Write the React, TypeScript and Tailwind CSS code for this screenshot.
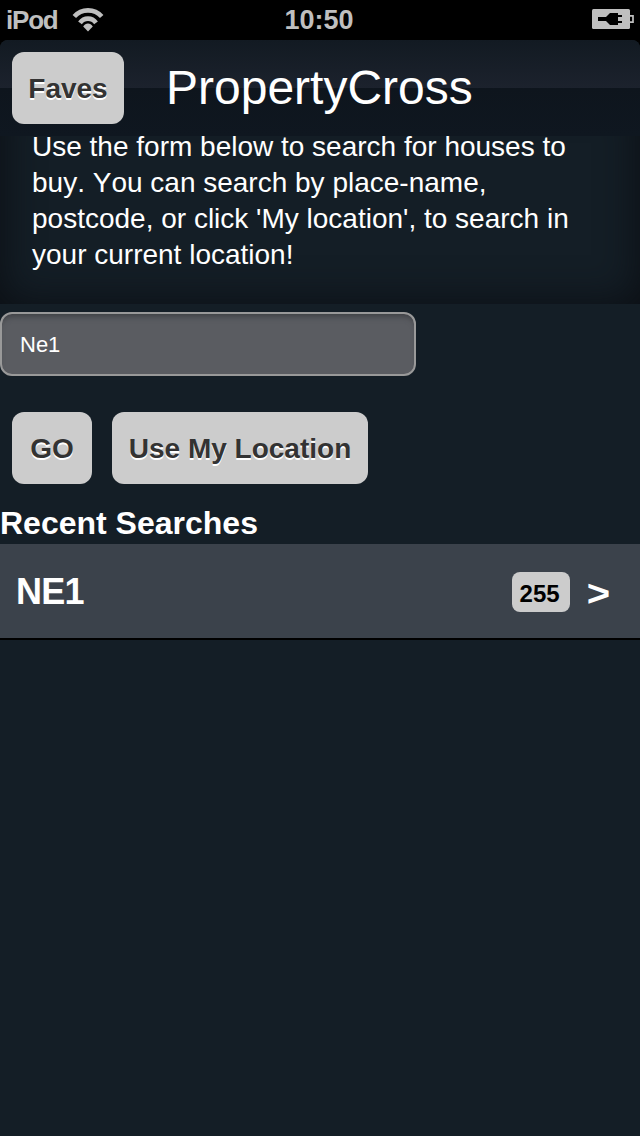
export default function App() {
  return (
    <div className="flex h-[1136px] w-[640px] flex-col overflow-hidden bg-black font-['Liberation_Sans',Arial,sans-serif] text-white [font-kerning:none]">
      <StatusBar />
      <div className="flex flex-1 flex-col overflow-hidden rounded-t-lg bg-[#141e26]">
        <header className="flex h-24 shrink-0 items-start bg-[linear-gradient(to_bottom,#121a22_0%,#1c222d_50%,#0e151d_50%,#0f1720_100%)] pl-3 pt-3">
          <Button label="Faves" className="w-28" />
          <h1 className="ml-[42px] h-[72px] whitespace-nowrap text-[48px] leading-[72px]">PropertyCross</h1>
        </header>
        <section className="flex h-[168px] shrink-0 flex-col overflow-hidden">
          <div className="-mt-[42px] h-[210px] shrink-0 px-8 pt-[35px] shadow-[inset_0_0_40px_#0b0e13]">
            <p className="whitespace-nowrap text-[28px] leading-9">
              Use the form below to search for houses to<br />
              buy. You can search by place-name,<br />
              postcode, or click 'My location', to search in<br />
              your current location!
            </p>
          </div>
        </section>
        <div className="mt-2 flex h-16 w-[416px] shrink-0 items-center rounded-xl border-2 border-[#999] bg-[#5a5c61] pl-[18px] text-[22px] shadow-[inset_0_6px_6px_-4px_#3b3d41]">
          Ne1
        </div>
        <div className="mt-9 flex shrink-0 gap-5 pl-3">
          <Button label="GO" className="w-20" />
          <Button label="Use My Location" className="w-64" />
        </div>
        <h2 className="mt-5 h-10 shrink-0 whitespace-nowrap text-[32px] font-bold leading-[38px]">Recent Searches</h2>
        <div className="flex h-24 shrink-0 items-center border-b-2 border-black bg-[#3b424b] pl-4">
          <span className="flex-1 pt-0.5 text-[36px] font-bold tracking-[-0.7px]">NE1</span>
          <span className="mt-0.5 flex h-10 w-[58px] items-center justify-center rounded-lg bg-[#ccc] pt-1 pr-0.5 text-[24px] font-bold text-black">255</span>
          <span className="ml-[17px] mr-[30px] mt-1 origin-center scale-y-90 text-[40px] font-bold">&gt;</span>
        </div>
      </div>
    </div>
  );
}

function Button({ label, className }: { label: string; className: string }) {
  return (
    <button className={`flex h-[72px] shrink-0 items-center justify-center whitespace-nowrap rounded-xl bg-[#ccc] pt-0.5 text-[28px] font-bold text-[#333] [text-shadow:0_2px_0_#fff] ${className}`}>
      {label}
    </button>
  );
}

function StatusBar() {
  return (
    <div className="grid h-10 shrink-0 grid-cols-3 items-center bg-black pl-1.5 pr-1.5 text-[27px] font-bold text-[#bfbfbf]">
      <div className="flex items-center">
        <span className="w-[66px] text-[26px] tracking-[-1.2px]">iPod</span>
        <svg width="32" height="24" viewBox="0 0 32 24" fill="none" stroke="#bfbfbf" strokeWidth="4.600">
          <path d="M2.300 8.600C9.500 0.300 22.500 0.300 29.700 8.600" />
          <path d="M8 14.800C12 9.200 20 9.200 24 14.800" />
          <path d="M16 23.400L11.200 18.600C13.500 14.600 18.500 14.600 20.800 18.600Z" fill="#bfbfbf" stroke="none" />
        </svg>
      </div>
      <span className="pr-0.5 text-center">10:50</span>
      <svg className="-mt-0.5 justify-self-end" width="42" height="20" viewBox="0 0 42 20">
        <rect width="38" height="20" rx="1.500" fill="#bfbfbf" />
        <path d="M38 6.800H41V13.200H38" fill="none" stroke="#bfbfbf" strokeWidth="1.700" />
        <path d="M6 8H14L18 4H26V6H30V8H26V12H30V14H26V16H18L14 12H6Z" fill="#000" />
      </svg>
    </div>
  );
}
